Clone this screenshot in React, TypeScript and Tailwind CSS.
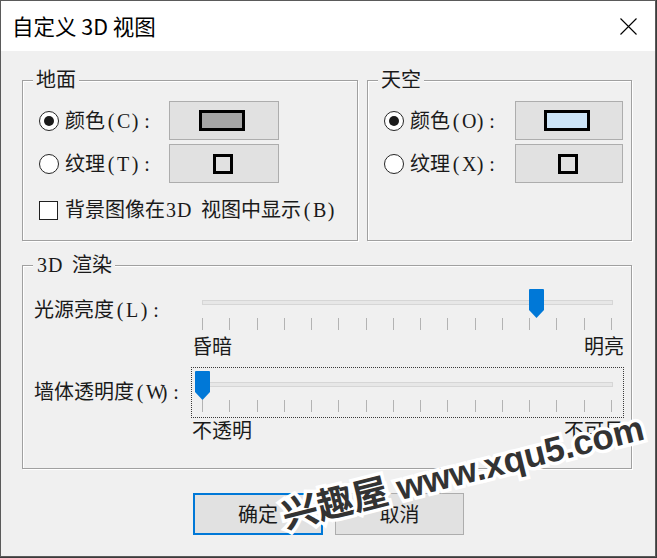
import React from "react";

function T({ s }: { s: string }) {
  return (
    <>
      {Array.from(s).map((c, i) =>
        c.charCodeAt(0) < 128 ? (
          <span key={i} className="inline-block w-[12px] text-center">
            {c === " " ? "\u00a0" : c}
          </span>
        ) : (
          <span key={i}>{c}</span>
        )
      )}
    </>
  );
}

function Radio({ checked }: { checked?: boolean }) {
  return (
    <div className="w-[20px] h-[20px] rounded-full border border-[#262626] bg-white flex items-center justify-center shrink-0">
      {checked && <div className="w-[10px] h-[10px] rounded-full bg-[#1a1a1a]" />}
    </div>
  );
}

function SwatchButton({ children, w }: { children: React.ReactNode; w: string }) {
  return (
    <div className={`${w} h-[39px] bg-[#e1e1e1] border border-[#adadad] flex items-center justify-center`}>
      {children}
    </div>
  );
}

function GroupLabel({ children, left }: { children: React.ReactNode; left: string }) {
  return (
    <div className={`absolute ${left} top-[-12px] px-[3px] bg-[#f0f0f0] leading-[22px] text-[20px] text-[#1a1a1a] whitespace-nowrap`}>
      {children}
    </div>
  );
}

function Slider({ thumbLeft, focused }: { thumbLeft: number; focused?: boolean }) {
  const ticks = Array.from({ length: 16 }, (_, i) => 10 + Math.round((i * 409) / 15));
  return (
    <div
      className={
        focused
          ? "relative w-[433px] h-[51px] border border-dotted border-[#3a3a3a]"
          : "relative w-[433px] h-[51px] border border-transparent"
      }
    >
      <div className="absolute left-[10px] top-[14px] w-[411px] h-[5px] bg-[#e7e7e7] border border-[#d6d6d6]" />
      {ticks.map((t) => (
        <div key={t} className="absolute top-[32px] h-[12px] w-px bg-[#b3b3b3]" style={{ left: t }} />
      ))}
      <svg className="absolute top-[3px]" style={{ left: thumbLeft }} width="15" height="29" viewBox="0 0 15 29">
        <path d="M1 0H14A1 1 0 0 1 15 1V21L7.5 29L0 21V1A1 1 0 0 1 1 0Z" fill="#0078d7" />
      </svg>
    </div>
  );
}

export default function App() {
  return (
    <div className="relative w-[657px] h-[558px] bg-[#3c3c3c] overflow-hidden">
      <div className="w-[656px] h-[557px] border border-[#5a5a5a] bg-[#f0f0f0] flex flex-col [font-family:'Liberation_Serif','Noto_Sans_CJK_SC',serif] text-[#1a1a1a]">
        {/* Title bar */}
        <div className="h-[50px] bg-white flex items-center justify-between pl-[11px] pr-[18px] shrink-0">
          <div className="text-[21.5px] leading-[28px] text-black [font-family:'Noto_Sans_CJK_SC',sans-serif]">
            自定义 3D 视图
          </div>
          <svg width="17" height="17" viewBox="0 0 17 17">
            <path d="M0.5 0.5L16.5 16.5M16.5 0.5L0.5 16.5" stroke="#000" strokeWidth="1.1" />
          </svg>
        </div>

        {/* Body */}
        <div className="flex flex-col pl-[21px] pt-[29px]">
          <div className="flex gap-[9px]">
            {/* 地面 */}
            <div className="relative w-[336px] h-[161px] border border-[#a0a0a0] shadow-[inset_1px_1px_0_#fff,1px_1px_0_#fff] pl-[16px] pt-[20px]">
              <GroupLabel left="left-[10px]">地面</GroupLabel>
              <div className="flex flex-col gap-[4px]">
                <div className="flex items-center">
                  <div className="w-[130px] flex items-center gap-[6px] text-[20px] leading-[22px] whitespace-nowrap">
                    <Radio checked />
                    <span>
                      <T s="颜色(C):" />
                    </span>
                  </div>
                  <SwatchButton w="w-[110px]">
                    <div className="w-[46px] h-[21px] bg-[#a5a5a5] border-[3px] border-black ml-[-4px]" />
                  </SwatchButton>
                </div>
                <div className="flex items-center">
                  <div className="w-[130px] flex items-center gap-[6px] text-[20px] leading-[22px] whitespace-nowrap">
                    <Radio />
                    <span>
                      <T s="纹理(T):" />
                    </span>
                  </div>
                  <SwatchButton w="w-[110px]">
                    <div className="w-[20px] h-[20px] border-[3px] border-black ml-[-2px]" />
                  </SwatchButton>
                </div>
              </div>
              <div className="flex items-center gap-[7px] mt-[17px] h-[20px] text-[20px] leading-[22px] whitespace-nowrap">
                <div className="w-[19px] h-[19px] border border-[#1f1f1f] bg-white shrink-0" />
                <span>
                  <T s="背景图像在3D 视图中显示(B)" />
                </span>
              </div>
            </div>

            {/* 天空 */}
            <div className="relative w-[265px] h-[161px] border border-[#a0a0a0] shadow-[inset_1px_1px_0_#fff,1px_1px_0_#fff] pl-[16px] pt-[20px]">
              <GroupLabel left="left-[10px]">天空</GroupLabel>
              <div className="flex flex-col gap-[4px]">
                <div className="flex items-center">
                  <div className="w-[131px] flex items-center gap-[6px] text-[20px] leading-[22px] whitespace-nowrap">
                    <Radio checked />
                    <span>
                      <T s="颜色(O):" />
                    </span>
                  </div>
                  <SwatchButton w="w-[108px]">
                    <div className="w-[46px] h-[21px] bg-[#cce4f7] border-[3px] border-black ml-[-4px]" />
                  </SwatchButton>
                </div>
                <div className="flex items-center">
                  <div className="w-[131px] flex items-center gap-[6px] text-[20px] leading-[22px] whitespace-nowrap">
                    <Radio />
                    <span>
                      <T s="纹理(X):" />
                    </span>
                  </div>
                  <SwatchButton w="w-[108px]">
                    <div className="w-[20px] h-[20px] border-[3px] border-black ml-[-2px]" />
                  </SwatchButton>
                </div>
              </div>
            </div>
          </div>

          {/* 3D 渲染 */}
          <div className="relative mt-[24px] w-[610px] h-[204px] border border-[#a0a0a0] shadow-[inset_1px_1px_0_#fff,1px_1px_0_#fff] pl-[11px] pt-[19px]">
            <GroupLabel left="left-[10px]">
              <T s="3D 渲染" />
            </GroupLabel>
            <div className="flex items-start">
              <div className="w-[157px] mt-[14px] text-[20px] leading-[22px] whitespace-nowrap">
                <T s="光源亮度(L):" />
              </div>
              <Slider thumbLeft={337} />
            </div>
            <div className="ml-[157px] w-[433px] flex justify-between text-[20px] leading-[22px] pl-[1px]">
              <span>昏暗</span>
              <span>明亮</span>
            </div>
            <div className="flex items-start mt-[9px]">
              <div className="w-[157px] mt-[14px] text-[20px] leading-[22px] whitespace-nowrap">
                <T s="墙体透明度(W):" />
              </div>
              <Slider thumbLeft={3} focused />
            </div>
            <div className="ml-[157px] w-[433px] flex justify-between text-[20px] leading-[22px] pl-[1px] mt-[2px]">
              <span>不透明</span>
              <span>不可见</span>
            </div>
          </div>

          {/* Buttons */}
          <div className="flex gap-[12px] mt-[24px] ml-[171px] text-[20px] [font-family:'Noto_Sans_CJK_SC',sans-serif]">
            <div className="w-[130px] h-[42px] bg-[#e1e1e1] border-2 border-[#0078d7] flex items-center justify-center">
              确定
            </div>
            <div className="w-[129px] h-[42px] bg-[#e1e1e1] border border-[#adadad] flex items-center justify-center">
              取消
            </div>
          </div>
        </div>
      </div>

      {/* Watermark overlay */}
      <div className="absolute left-[283px] top-[494px] origin-[0_50%] rotate-[-14deg] whitespace-nowrap leading-[38px] text-[#333] [paint-order:stroke] [-webkit-text-stroke:7px_#fff] font-bold">
        <span className="text-[36px] [font-family:'Noto_Sans_CJK_SC',sans-serif]">兴趣屋</span>
        <span className="text-[35px] [font-family:'Liberation_Sans',sans-serif]"> www.xqu5.com</span>
      </div>
    </div>
  );
}
